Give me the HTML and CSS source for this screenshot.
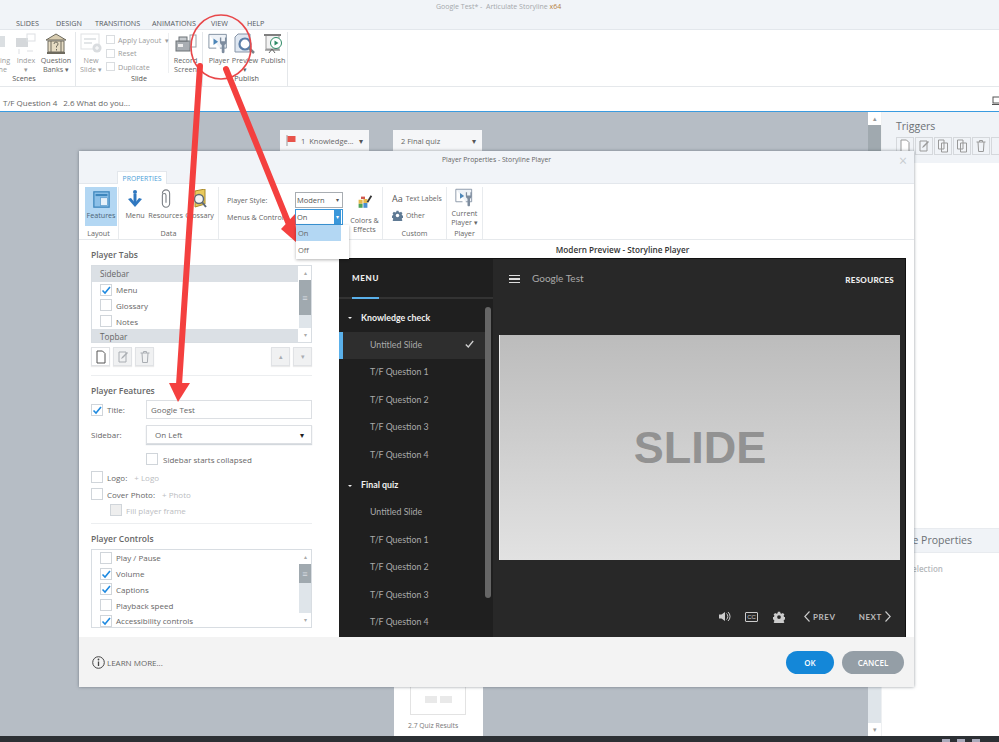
FILE: index.html
```html
<!DOCTYPE html>
<html lang="en">
<head>
<meta charset="utf-8">
<title>Player Properties - Storyline Player</title>
<link rel="stylesheet" href="styles.css">
</head>
<body>
<svg class="defs" width="0" height="0">
  <symbol id="check" viewBox="0 0 12 12"><path d="M2.5 6.5 L5 9 L10 3" fill="none" stroke="#1f8ae0" stroke-width="1.6"/></symbol>
  <symbol id="player-ico" viewBox="0 0 24 24"><path d="M1 1.5h19v15H13" fill="#eef2f7" stroke="#7d8c9e"/><path d="M1 1.5v15h8" fill="none" stroke="#7d8c9e"/><path d="M6 6l5 3.5L6 13z" fill="#4d86b8"/><path d="M13 5v5a3.5 3.5 0 0 0 2 3v8a1.6 1.6 0 0 0 3 0v-8a3.5 3.5 0 0 0 2-3V5l-1.500 0v4h-4V5z" fill="#7d8c9e"/></symbol>
  <symbol id="gear" viewBox="0 0 16 16"><path d="M6.500 1h3l.4 2 1.500.7 1.800-1.100 2 2-1.100 1.800.7 1.500 2 .4v3l-2 .4-.7 1.500 1.100 1.800-2 2-1.800-1.100-1.500.7-.4 2h-3l-.4-2-1.500-.7-1.800 1.100-2-2 1.100-1.800-.7-1.500-2-.4v-3l2-.4.7-1.500-1.100-1.800 2-2 1.800 1.100 1.500-.7z" fill="currentColor"/><circle cx="8" cy="8" r="2.500" fill="var(--hole,#fff)"/></symbol>
  <symbol id="doc" viewBox="0 0 12 14"><path d="M2 1h5.500L10 3.500V13H2z" fill="#fff" stroke="currentColor"/></symbol>
  <symbol id="edit" viewBox="0 0 12 14"><path d="M2 2h7v10H2z" fill="none" stroke="currentColor"/><path d="M4 9l1 -2 5 -5 1 1-5 5z" fill="currentColor"/></symbol>
  <symbol id="trash" viewBox="0 0 12 14"><path d="M1.500 3h9M4.500 3V1.500h3V3M3 3l.6 9.500h4.800L9 3" fill="none" stroke="currentColor"/></symbol>
  <symbol id="copy" viewBox="0 0 12 14"><path d="M1.500 1h5.500v9H1.500zM4.500 4h6v9h-6z" fill="#f3f5f8" stroke="currentColor"/></symbol>
</svg>

<div class="page">
  <div class="app">
    <header class="titlebar">
      <div class="wintitle">Google Test* -&nbsp; Articulate Storyline <span class="x64">x64</span></div>
      <nav class="apptabs">
        <span class="t1">SLIDES</span><span class="t2">DESIGN</span><span class="t3">TRANSITIONS</span><span class="t4">ANIMATIONS</span><span class="t5">VIEW</span><span class="t6">HELP</span>
      </nav>
    </header>
    <section class="appribbon">
      <div class="ag ag-scenes">
        <div class="ag-body">
          <div class="ai ai-start dim">
            <svg class="ico" width="22" height="22" viewBox="0 0 22 22"><rect x="5" y="3" width="14" height="11" fill="#c9ced3"/></svg>
            <span>Starting<br>Scene</span>
          </div>
          <div class="ai ai-index dim">
            <svg class="ico" width="22" height="22" viewBox="0 0 22 22"><rect x="1" y="5" width="12" height="9" fill="#bfc4c9"/><rect x="12" y="1" width="8" height="7" fill="none" stroke="#ccd1d6"/><path d="M4 16v5M12 18h6" stroke="#ccd1d6"/></svg>
            <span>Index<br>▾</span>
          </div>
          <div class="ai ai-qb">
            <svg class="ico" width="22" height="22" viewBox="0 0 22 22"><path d="M1 7L11 1l10 6z" fill="#d9cdb0" stroke="#6e6a5e"/><rect x="3" y="8" width="16" height="11" fill="#e6dcc4" stroke="#6e6a5e"/><path d="M2 20h18" stroke="#6e6a5e" stroke-width="2"/><path d="M6 8v11M16 8v11" stroke="#6e6a5e"/><path d="M9 11a2 2 0 1 1 2.500 2v1.500M11.500 16v1.500" fill="none" stroke="#6e6a5e"/></svg>
            <span>Question<br>Banks ▾</span>
          </div>
        </div>
        <div class="ag-label">Scenes</div>
      </div>
      <div class="ag ag-slide">
        <div class="ag-body">
          <div class="ai ai-new dim">
            <svg class="ico" width="22" height="22" viewBox="0 0 22 22"><rect x="1" y="1" width="18" height="15" fill="#fff" stroke="#cfd3d7"/><path d="M4 6h12M4 10h8" stroke="#d5d9dd" stroke-width="2"/><circle cx="17" cy="15" r="4.500" fill="#c5cacf"/><path d="M15 15h4M17 13v4" stroke="#fff"/></svg>
            <span>New<br>Slide ▾</span>
          </div>
          <ul class="slidecmds dim">
            <li><i class="smallbox"></i>Apply Layout <em>▾</em></li>
            <li><i class="smallbox"></i>Reset</li>
            <li><i class="smallbox"></i>Duplicate</li>
          </ul>
          <div class="ai ai-record">
            <svg class="ico" width="22" height="22" viewBox="0 0 22 22"><rect x="1" y="8" width="14" height="10" fill="#a9aeb3" stroke="#6c7277"/><rect x="4" y="4" width="8" height="4" fill="#c7cbcf" stroke="#6c7277"/><rect x="3" y="11" width="5" height="3" fill="#f0f0f0"/><rect x="15" y="2" width="6" height="12" fill="none" stroke="#9aa1a7"/></svg>
            <span>Record<br>Screen</span>
          </div>
        </div>
        <div class="ag-label ag-label-slide">Slide</div>
      </div>
      <div class="ag ag-publish">
        <div class="ag-body">
          <div class="ai ai-player">
            <svg class="ico" width="22" height="22"><use href="#player-ico"/></svg>
            <span>Player</span>
          </div>
          <div class="ai ai-preview">
            <svg class="ico" width="22" height="22" viewBox="0 0 22 22"><path d="M1 4l3-3h12v18H1z" fill="#dfe7f1" stroke="#8795a8"/><circle cx="11" cy="11" r="5.500" fill="#fff" stroke="#5c7ea8" stroke-width="2.200"/><path d="M15 15l5 5" stroke="#7b8087" stroke-width="2.500"/></svg>
            <span>Preview<br>▾</span>
          </div>
          <div class="ai ai-publishbtn">
            <svg class="ico" width="22" height="22" viewBox="0 0 22 22"><path d="M2 2h17" stroke="#555" stroke-width="1.500"/><path d="M4 3v13h13V3" fill="#f2f2f2" stroke="#9a9a9a"/><circle cx="14" cy="10" r="5.500" fill="#fff" stroke="#2e8a66"/><path d="M12.500 7.500l4 2.500-4 2.500z" fill="#2e8a66"/><path d="M7 20l3-4 3 4M3 17h15" stroke="#666" fill="none"/></svg>
            <span>Publish</span>
          </div>
        </div>
        <div class="ag-label ag-label-pub">Publish</div>
      </div>
    </section>
    <div class="crumbs"><span>T/F Question 4</span><span>2.6 What do you...</span><svg class="crumb-ico" width="8" height="10" viewBox="0 0 8 10"><rect x="1" y="1" width="7" height="6" fill="none" stroke="#555"/><path d="M0 8.500h8" stroke="#555"/></svg></div>

    <div class="workspace">
      <main class="canvas">
        <div class="scene scene1">
          <svg width="10" height="11" viewBox="0 0 10 11"><path d="M1 0v11" stroke="#999"/><path d="M1.500 1h8v6h-8z" fill="#e8534a"/></svg>
          <span>1&nbsp; Knowledge...</span><b>▾</b>
        </div>
        <div class="scene scene2"><span>2 Final quiz</span><b>▾</b></div>
        <div class="quizcard">
          <div class="quizthumb"><i></i><i></i></div>
          <div class="quizname">2.7 Quiz Results</div>
        </div>
      </main>
      <div class="vscroll">
        <div class="vs-btn">▴</div>
        <div class="vs-thumb"></div>
        <div class="vs-track"></div>
        <div class="vs-btn">▾</div>
      </div>
      <aside class="panel">
        <div class="p-head">
          <div class="p-title">Triggers</div>
          <div class="p-tools">
            <i><svg width="12" height="14"><use href="#doc"/></svg></i>
            <i><svg width="12" height="14"><use href="#edit"/></svg></i>
            <i><svg width="12" height="14"><use href="#copy"/></svg></i>
            <i><svg width="12" height="14"><use href="#copy"/></svg></i>
            <i><svg width="12" height="14"><use href="#trash"/></svg></i>
            <i></i>
          </div>
        </div>
        <div class="p-blank"></div>
        <div class="p-head2">Slide Properties</div>
        <div class="p-none">No selection</div>
      </aside>
    </div>
    <footer class="statusbar"><i></i><i></i><i></i></footer>
  </div>

  <div class="dialog">
    <div class="d-title">
      <div class="d-caption">Player Properties - Storyline Player</div>
      <div class="d-close">×</div>
      <div class="d-tab">PROPERTIES</div>
    </div>
    <div class="d-ribbon">
      <div class="dg dg-layout">
        <div class="dg-body">
          <div class="di di-on">
            <svg width="17" height="17" viewBox="0 0 20 20"><rect x="1" y="1" width="18" height="18" fill="#8cc0e8" stroke="#3d86bd" stroke-width="1.500"/><rect x="3" y="3.500" width="14" height="2.500" fill="#3d86bd"/><rect x="9" y="8" width="8" height="9" fill="#e8f2fa" stroke="#3d86bd" stroke-width=".6"/></svg>
            <span>Features</span>
          </div>
        </div>
        <div class="dg-label">Layout</div>
      </div>
      <div class="dg dg-data">
        <div class="dg-body">
          <div class="di di-menu">
            <svg width="20" height="20" viewBox="0 0 20 20"><circle cx="10" cy="3" r="2" fill="#2f78c0"/><path d="M10 5v10" stroke="#2f78c0" stroke-width="3"/><path d="M3 10l7 8 7-8-3-1-4 5-4-5z" fill="#2f78c0"/></svg>
            <span>Menu</span>
          </div>
          <div class="di di-res">
            <svg width="20" height="20" viewBox="0 0 20 22"><path d="M6 5a4 4 0 0 1 8 0v11a4 4 0 0 1-8 0V7a2 2 0 0 1 4 0v8" fill="none" stroke="#7a7f85" stroke-width="1.200"/></svg>
            <span>Resources</span>
          </div>
          <div class="di di-glos">
            <svg width="20" height="20" viewBox="0 0 20 20"><path d="M5 2l10-2v15l-10 3z" fill="#e9c95c" stroke="#a98b2c"/><circle cx="9" cy="10" r="4.500" fill="#f4f4f4" stroke="#5d6a77" stroke-width="1.400"/><path d="M12 13l4 5" stroke="#5d6a77" stroke-width="2"/></svg>
            <span>Glossary</span>
          </div>
        </div>
        <div class="dg-label">Data</div>
      </div>
      <div class="dg dg-style">
        <div class="dg-body dg-style-body">
          <div class="style-form">
            <div class="sf-row"><label>Player Style:</label><div class="sel">Modern<b>▾</b></div></div>
            <div class="sf-row"><label>Menus &amp; Controls:</label>
              <div class="sel sel-open">On<b>▾</b>
                <ul class="ddmenu"><li class="dd-on">On</li><li>Off</li></ul>
              </div>
            </div>
          </div>
          <div class="di di-colors">
            <svg width="16" height="16" viewBox="0 0 20 20"><path d="M2 6h5v5H2zM8 5h5v5H8z" fill="#e5b84a"/><path d="M2 11h5v5H2z" fill="#4ea35a"/><path d="M8 10h5v6H8z" fill="#4a8fd0"/><path d="M5 2h5v3H5z" fill="#d0594e"/><path d="M13 9l5-8" stroke="#333" stroke-width="2.200"/></svg>
            <span>Colors &amp;<br>Effects</span>
          </div>
        </div>
      </div>
      <div class="dg dg-custom">
        <div class="dg-body custom-body">
          <div class="cu-row"><span class="aa">Aa</span>Text Labels</div>
          <div class="cu-row"><svg class="cu-gear" width="11" height="11"><use href="#gear"/></svg>Other</div>
        </div>
        <div class="dg-label">Custom</div>
      </div>
      <div class="dg dg-player">
        <div class="dg-body">
          <div class="di">
            <svg width="20" height="20"><use href="#player-ico"/></svg>
            <span>Current<br>Player ▾</span>
          </div>
        </div>
        <div class="dg-label">Player</div>
      </div>
    </div>

    <div class="d-body">
      <div class="d-left">
        <h3 class="h-first">Player Tabs</h3>
        <div class="listbox">
          <div class="lb-rows">
            <div class="lb-group">Sidebar</div>
            <div class="lb-row"><i class="cb"><svg width="12" height="12"><use href="#check"/></svg></i>Menu</div>
            <div class="lb-row"><i class="cb"></i>Glossary</div>
            <div class="lb-row"><i class="cb"></i>Notes</div>
            <div class="lb-group">Topbar</div>
          </div>
          <div class="lb-scroll"><div class="lb-btn">▴</div><div class="lb-thumb lb-thumb-a">≡</div><div class="lb-track"></div><div class="lb-btn">▾</div></div>
        </div>
        <div class="toolrow">
          <i class="tb tb-on"><svg width="12" height="14"><use href="#doc"/></svg></i>
          <i class="tb"><svg width="12" height="14"><use href="#edit"/></svg></i>
          <i class="tb"><svg width="12" height="14"><use href="#trash"/></svg></i>
          <span class="grow"></span>
          <i class="tb">▴</i>
          <i class="tb">▾</i>
        </div>
        <hr class="rule">
        <h3>Player Features</h3>
        <div class="frow frow-title">
          <i class="cb"><svg width="12" height="12"><use href="#check"/></svg></i><label class="flab-cb">Title:</label>
          <div class="input">Google Test</div>
        </div>
        <div class="frow frow-side">
          <label class="flab">Sidebar:</label>
          <div class="input select">On Left<b>▾</b></div>
        </div>
        <div class="frow frow-coll"><i class="cb"></i><span>Sidebar starts collapsed</span></div>
        <div class="frow frow-logo"><i class="cb"></i><label class="lab2">Logo:</label><span class="plus">+ Logo</span></div>
        <div class="frow frow-cover"><i class="cb"></i><label class="lab2">Cover Photo:</label><span class="plus">+ Photo</span></div>
        <div class="frow frow-fill"><i class="cb cb-dis"></i><span class="dis">Fill player frame</span></div>
        <hr class="rule rule2">
        <h3>Player Controls</h3>
        <div class="listbox listbox2">
          <div class="lb-rows">
            <div class="lb-row"><i class="cb"></i>Play / Pause</div>
            <div class="lb-row"><i class="cb"><svg width="12" height="12"><use href="#check"/></svg></i>Volume</div>
            <div class="lb-row"><i class="cb"><svg width="12" height="12"><use href="#check"/></svg></i>Captions</div>
            <div class="lb-row"><i class="cb"></i>Playback speed</div>
            <div class="lb-row"><i class="cb"><svg width="12" height="12"><use href="#check"/></svg></i>Accessibility controls</div>
          </div>
          <div class="lb-scroll"><div class="lb-btn">▴</div><div class="lb-thumb lb-thumb-b">≡</div><div class="lb-track"></div><div class="lb-btn">▾</div></div>
        </div>
      </div>
      <div class="d-right">
        <div class="pv-title">Modern Preview - Storyline Player</div>
        <div class="pv">
          <div class="pv-side">
            <div class="pv-menuhead"><span>MENU</span></div>
            <div class="pv-list">
              <div class="pv-sec">Knowledge check</div>
              <div class="pv-item pv-cur">Untitled Slide<svg class="pv-tick" width="9" height="8" viewBox="0 0 9 8"><path d="M.8 4.500L3.300 7 8.200 1" fill="none" stroke="#cfcfcf" stroke-width="1.300"/></svg></div>
              <div class="pv-item">T/F Question 1</div>
              <div class="pv-item">T/F Question 2</div>
              <div class="pv-item">T/F Question 3</div>
              <div class="pv-item">T/F Question 4</div>
              <div class="pv-sec pv-sec2">Final quiz</div>
              <div class="pv-item">Untitled Slide</div>
              <div class="pv-item">T/F Question 1</div>
              <div class="pv-item">T/F Question 2</div>
              <div class="pv-item">T/F Question 3</div>
              <div class="pv-item">T/F Question 4</div>
              <div class="pv-sb"></div>
            </div>
          </div>
          <div class="pv-main">
            <div class="pv-top">
              <div class="pv-burger"><i></i><i></i><i></i></div>
              <div class="pv-name">Google Test</div>
              <div class="pv-res">RESOURCES</div>
            </div>
            <div class="pv-slide">SLIDE</div>
            <div class="pv-ctrl">
              <svg class="c-vol" width="12" height="11" viewBox="0 0 12 11"><path d="M0 3.500h2.500L6 1v9L2.500 7.500H0z" fill="#ccc"/><path d="M7.500 2.500a4 4 0 0 1 0 6M9 1a6 6 0 0 1 0 9" fill="none" stroke="#ccc"/></svg>
              <div class="c-cc">CC</div>
              <svg class="c-gear" width="12" height="12"><use href="#gear"/></svg>
              <svg class="c-chev c-chev-l" width="6" height="11" viewBox="0 0 6 11"><path d="M5.500.5L.8 5.500l4.700 5" fill="none" stroke="#ccc" stroke-width="1.100"/></svg>
              <span class="c-prev">PREV</span>
              <span class="c-next">NEXT</span>
              <svg class="c-chev" width="6" height="11" viewBox="0 0 6 11"><path d="M.5.500l4.700 5-4.700 5" fill="none" stroke="#ccc" stroke-width="1.100"/></svg>
            </div>
          </div>
        </div>
      </div>
    </div>

    <div class="d-foot">
      <svg width="13" height="13" viewBox="0 0 13 13"><circle cx="6.500" cy="6.500" r="5.800" fill="none" stroke="#444"/><path d="M6.500 5.500v4.500" stroke="#444" stroke-width="1.300"/><circle cx="6.500" cy="3.500" r=".9" fill="#444"/></svg>
      <span class="learn">LEARN MORE...</span>
      <span class="grow"></span>
      <div class="btn btn-ok">OK</div>
      <div class="btn btn-cancel">CANCEL</div>
    </div>
  </div>

  <svg class="annot" width="999" height="742" viewBox="0 0 999 742">
    <ellipse cx="221" cy="47" rx="30" ry="32" fill="none" stroke="#e8474a" stroke-width="1.600"/>
    <path d="M200 66L179 385" stroke="#f4403f" stroke-width="6" stroke-linecap="round"/>
    <path d="M169 383h21l-12 19z" fill="#f4403f"/>
    <path d="M226 69L288 222" stroke="#f4403f" stroke-width="6" stroke-linecap="round"/>
    <path d="M295 214L281 229l16 14z" fill="#f4403f"/>
  </svg>
</div>
</body>
</html>
```

FILE: styles.css
```css
* { box-sizing: border-box; }
html, body { margin: 0; padding: 0; }
body { font-family: "Open Sans", "Liberation Sans", sans-serif; color: #666; font-size: 8px; }
i, em { font-style: normal; }
ul { list-style: none; margin: 0; padding: 0; }
.defs { position: absolute; }
.grow { flex: 1; }
.page { position: relative; width: 999px; height: 742px; overflow: hidden; background: #fff; }
.app { display: flex; flex-direction: column; height: 742px; overflow: hidden; }

/* app chrome */
.titlebar { height: 30px; background: #f1f4f8; border-bottom: 1px solid #e3e7ec; padding-top: 2px; flex: none; }
.wintitle { margin-left: 436px; font-size: 7px; line-height: 9px; color: #a4a8ac; white-space: nowrap; }
.x64 { color: #b5803f; }
.apptabs { display: flex; font-size: 7.2px; line-height: 9px; margin-top: 8px; color: #55595e; }
.apptabs span { display: block; }
.t1 { margin-left: 16px; width: 40px; }
.t2 { width: 39px; }
.t3 { width: 57px; }
.t4 { width: 59px; }
.t5 { width: 36px; }

.appribbon { height: 57px; flex: none; display: flex; background: #fff; border-bottom: 1px solid #e5e8eb; overflow: hidden; }
.ag { padding-top: 1px; border-right: 1px solid #e4e7ea; height: 54px; margin-top: 2px; display: flex; flex-direction: column; flex: none; }
.ag-body { display: flex; height: 41px; }
.ag-label { text-align: center; font-size: 7.2px; line-height: 9px; margin-top: 0; color: #555; }
.ag-scenes { width: 103px; margin-left: -27px; }
.ag-slide { width: 127px; }
.ag-publish { width: 85px; }
.ai { display: flex; flex-direction: column; align-items: center; text-align: center; font-size: 7.2px; line-height: 8.500px; color: #666; flex: none; white-space: nowrap; }
.ai .ico { margin-bottom: 1px; }
.ai-start { width: 48px; }
.ai-index { width: 24px; margin-left: -7px; }
.ai-qb { width: 36px; }
.dim { opacity: .65; }
.ai-new { width: 30px; }
.slidecmds { font-size: 7.2px; width: 63px; border-right: 1px solid #e4e7ea; height: 40px; flex: none; }
.slidecmds li { display: flex; align-items: center; height: 13.500px; white-space: nowrap; }
.slidecmds em { margin-left: 4px; }
.smallbox { width: 9px; height: 9px; border: 1px solid #c7ccd1; margin-right: 3px; flex: none; }
.ai-record { width: 33px; }
.ai-player { width: 30px; margin-left: 1px; }
.ai-preview { width: 22px; }
.ai-publishbtn { width: 34px; }
.ag-label-slide { padding-right: 0; }
.ag-label-pub { margin-left: 3px; }

.crumbs { height: 25px; flex: none; background: #fff; border-bottom: 1px solid #3a9be0; display: flex; align-items: center; gap: 6px; padding: 7px 0 0 3px; font-size: 8px; color: #666; position: relative; }
.crumb-ico { position: absolute; right: -1px; top: 9px; }
.workspace { flex: 1; display: flex; min-height: 0; }
.canvas { width: 868px; background: #b6bdc5; position: relative; }
.scene { position: absolute; top: 18px; height: 21px; width: 89px; background: #f5f6f8; display: flex; align-items: center; padding: 0 6px; font-size: 7.500px; color: #666; gap: 5px; }
.scene span { flex: 1; white-space: nowrap; }
.scene b { font-size: 8px; font-weight: 400; color: #555; }
.scene1 { left: 280px; }
.scene2 { left: 393px; padding-left: 8px; }
.quizcard { position: absolute; left: 394px; top: 575px; width: 89px; height: 49px; background: #fff; padding-left: 16px; }
.quizthumb { width: 56px; height: 28px; border: 1px solid #e3e3e3; border-top: 0; display: flex; justify-content: center; gap: 3px; padding-top: 9px; }
.quizthumb i { width: 12px; height: 7px; background: #e9e9e9; }
.quizname { font-size: 6.800px; line-height: 9px; margin: 6px 0 0 -2px; color: #777; white-space: nowrap; }
.vscroll { width: 13px; display: flex; flex-direction: column; flex: none; background: #dfe5ea; }
.vs-btn { height: 13px; background: #fff; text-align: center; font-size: 7px; line-height: 13px; color: #999; }
.vs-thumb { height: 60px; background: #a0a9af; }
.vs-track { flex: 1; }
.panel { width: 118px; flex: none; background: #fff; display: flex; flex-direction: column; overflow: hidden; border-left: 1px solid #eef0f2; }
.p-head { height: 51px; background: #f0f3f7; padding: 7px 0 0 14px; flex: none; }
.p-title { font-size: 10.500px; line-height: 14px; color: #6b7075; }
.p-tools { display: flex; gap: 1px; margin-top: 4px; }
.p-tools i { width: 18px; height: 18px; border: 1px solid #d5d8dc; flex: none; color: #999; padding: 1px 2px; display: block; }
.p-blank { height: 365px; flex: none; }
.p-head2 { height: 25px; background: #f0f3f7; border-top: 1px solid #e8ebef; border-bottom: 1px solid #e8ebef; line-height: 23px; font-size: 10.500px; padding-left: 13px; color: #6b7075; white-space: nowrap; flex: none; }
.p-none { font-size: 8px; color: #b5b8bb; padding: 10px 0 0 13px; font-weight: 600; }
.statusbar { height: 6px; background: #2c3034; flex: none; display: flex; justify-content: flex-end; gap: 7px; padding: 3px 19px 0 0; }
.statusbar i { width: 8px; height: 3px; background: #aab; }

/* dialog */
.dialog { position: absolute; left: 79px; top: 151px; width: 835px; height: 536px; background: #fff; display: flex; flex-direction: column; box-shadow: 0 0 3px rgba(60,70,80,.55); }
.d-title { height: 33px; flex: none; background: #f1f4f8; border-bottom: 1px solid #e3e7ec; position: relative; }
.d-caption { text-align: center; font-size: 6.800px; line-height: 18px; color: #666; }
.d-close { position: absolute; right: 7px; top: 3px; font-size: 14px; line-height: 14px; color: #c8ccd0; }
.d-tab { position: absolute; left: 38px; bottom: -1px; width: 50px; height: 13px; background: #fff; border: 1px solid #e3e7ec; border-bottom: 0; text-align: center; font-size: 6.800px; line-height: 13px; color: #4a9ed8; }

.d-ribbon { height: 56px; flex: none; display: flex; border-bottom: 1px solid #e6e9ec; padding-top: 3px; }
.dg { border-right: 1px solid #e8ebee; height: 52px; flex: none; display: flex; flex-direction: column; }
.dg-body { height: 40px; display: flex; }
.dg-label { text-align: center; font-size: 7.200px; line-height: 9px; margin-top: 2px; color: #666; }
.dg-layout { width: 40px; padding-left: 6px; }
.dg-layout .dg-label { margin-left: -6px; }
.dg-data { width: 100px; }
.dg-style { width: 164px; }
.dg-custom { width: 64px; }
.dg-player { width: 36px; }
.di { display: flex; flex-direction: column; align-items: center; text-align: center; font-size: 7.200px; line-height: 8.500px; color: #666; padding-top: 2px; width: 100%; white-space: nowrap; }
.di svg { flex: none; margin-bottom: 2px; }
.di-on { background: #b3d7f3; width: 32px; height: 39px; flex: none; padding-top: 4px; }
.di-on svg { margin-bottom: 3px; }
.di-on span { color: #4c6478; }
.di-menu { width: 31px; margin-left: 1px; }
.di-res { width: 31px; }
.di-glos { width: 38px; }
.dg-style-body { padding: 5px 0 0 8px; }
.style-form { width: 124px; flex: none; }
.sf-row { display: flex; height: 16.500px; align-items: center; position: relative; }
.sf-row label { width: 68px; font-size: 7.200px; white-space: nowrap; color: #666; }
.sel { width: 48px; height: 16px; border: 1px solid #a8adb2; font-size: 7.500px; line-height: 14px; padding-left: 1px; position: relative; color: #555; background: #fff; flex: none; }
.sel b { position: absolute; right: 1px; top: 0; width: 7px; font-weight: 400; font-size: 6px; text-align: center; color: #555; }
.sel-open { border-color: #3a97da; }
.sel-open b { background: #3a97da; color: #fff; height: 14px; }
.ddmenu { position: absolute; left: 0; top: 15px; width: 53px; height: 34px; background: #fff; box-shadow: 0 1px 3px rgba(0,0,0,.3); z-index: 3; }
.ddmenu li { height: 16px; padding-left: 2px; line-height: 16px; margin-bottom: 1px; color: #666; width: 45px; }
.dd-on { background: #b3d7f3; }
.di-colors { width: 27px; padding-top: 3px; flex: none; }
.di-colors svg { margin-bottom: 5px; }
.custom-body { display: block; padding: 3px 0 0 9px; }
.cu-row { display: flex; align-items: center; gap: 2px; height: 17px; font-size: 6.900px; white-space: nowrap; }
.aa { font-size: 9px; color: #555; margin-right: 1px; }
.cu-gear { color: #5f7a94; --hole: #fff; margin-right: 1px; }
.dg-player .di { padding-top: 1px; }
.dg-player .di svg { margin-bottom: 1px; }

.d-body { flex: 1; display: flex; min-height: 0; }
.d-left { width: 260px; flex: none; padding: 0 0 0 12px; font-size: 8px; }
.d-left h3 { margin: 9px 0 0; font-size: 8.500px; line-height: 12px; font-weight: 600; color: #666; }
.listbox { width: 221px; height: 78px; margin-top: 4px; border: 1px solid #d8dde2; display: flex; overflow: hidden; }
.listbox2 { height: 79px; }
.lb-rows { flex: 1; min-width: 0; }
.lb-group { height: 15.750px; background: #dbe0e5; padding-left: 8px; line-height: 15.750px; font-size: 8.200px; color: #666; }
.lb-row { height: 15.750px; display: flex; align-items: center; padding-left: 8px; font-size: 8px; gap: 4px; color: #666; }
.cb { width: 12px; height: 12px; border: 1px solid #d0d5da; background: #fff; display: block; flex: none; position: relative; }
.cb svg { position: absolute; left: -1px; top: -1px; }
.cb-dis { background: #eeeeee; }
.lb-scroll { width: 13px; flex: none; background: #dfe5ea; display: flex; flex-direction: column; border-left: 1px solid #fff; }
.lb-btn { height: 14px; background: #fff; color: #aaa; font-size: 6px; text-align: center; line-height: 14px; flex: none; }
.lb-thumb { background: #a0a9af; color: #d8dde2; text-align: center; flex: none; font-size: 9px; }
.lb-thumb-a { height: 35px; line-height: 35px; }
.lb-thumb-b { height: 19px; line-height: 19px; }
.lb-track { flex: 1; }
.toolrow { width: 221px; display: flex; height: 19px; margin-top: 4px; gap: 3px; }
.tb { width: 19px; height: 19px; background: #f0f1f2; border: 1px solid #e0e2e5; color: #a9adb2; display: flex; align-items: center; justify-content: center; font-size: 7px; flex: none; box-shadow: 0 1px 1px rgba(0,0,0,.08); }
.tb-on { background: #fff; color: #555; }
.rule { width: 221px; height: 1px; border: 0; background: #eceef0; margin: 9px 0 0; }
.frow { display: flex; align-items: center; width: 221px; font-size: 8px; color: #666; }
.frow-title { height: 19px; margin-top: 3px; }
.flab-cb { width: 39px; margin-left: 4px; }
.flab { width: 55px; }
.input { flex: 1; height: 19px; border: 1px solid #dcdfe3; line-height: 17px; padding-left: 4px; color: #666; font-size: 8px; position: relative; }
.select { padding-left: 8px; box-shadow: 0 1px 1px rgba(80,100,120,.25); }
.select b { position: absolute; right: 7px; top: 0; font-weight: 400; font-size: 8px; color: #222; }
.frow-side { height: 19px; margin-top: 6px; }
.frow-coll { height: 14px; margin-top: 8px; padding-left: 55px; gap: 5px; }
.frow-logo { height: 14px; margin-top: 4px; gap: 4px; }
.frow-cover { height: 14px; margin-top: 3px; gap: 4px; }
.frow-fill { height: 14px; margin-top: 2px; padding-left: 19px; gap: 4px; }
.lab2 { margin-right: 3px; }
.plus, .dis { color: #bbbdbf; }
.rule2 { margin-top: 6px; }

.d-right { flex: 1; display: flex; flex-direction: column; min-width: 0; padding-right: 8px; }
.pv-title { height: 18px; line-height: 19px; text-align: center; font-size: 8.200px; font-weight: 600; color: #333; white-space: nowrap; }
.pv { height: 379px; background: #282828; display: flex; font-family: Lato, "Open Sans", sans-serif; border-right: 1px solid #111; border-top: 1px solid #111; overflow: hidden; }
.pv-side { width: 154px; flex: none; background: #1f1f1f; }
.pv-menuhead { height: 40px; border-bottom: 2px solid #333; padding-left: 13px; }
.pv-menuhead span { display: block; width: 27px; height: 40px; border-bottom: 2px solid #5ab0ea; font-size: 8px; font-weight: 900; letter-spacing: .7px; line-height: 38px; color: #eee; }
.pv-list { position: relative; }
.pv-sec { height: 33px; padding: 13px 0 0 22px; font-size: 8.800px; line-height: 12px; font-weight: 700; color: #f0f0f0; position: relative; }
.pv-sec::before { content: ""; position: absolute; left: 9px; top: 18px; border: 2.500px solid transparent; border-top-color: #eee; border-bottom: 0; }
.pv-sec2 { height: 30.500px; padding-top: 10px; }
.pv-sec2::before { top: 16px; }
.pv-item { height: 27.400px; padding-left: 31px; font-size: 8.800px; line-height: 26px; color: #aaa; position: relative; }
.pv-cur { background: #2e2e2e; border-left: 4px solid #5ab0ea; padding-left: 27px; width: 146px; }
.pv-tick { position: absolute; right: 11px; top: 8px; }
.pv-sb { position: absolute; left: 146px; top: 8px; width: 6px; height: 291px; border-radius: 3px; background: #666; }
.pv-main { flex: 1; min-width: 0; display: flex; flex-direction: column; }
.pv-top { height: 76px; flex: none; display: flex; padding: 13px 11px 0 16px; }
.pv-burger { width: 11px; height: 8px; display: flex; flex-direction: column; justify-content: space-between; margin-top: 3px; }
.pv-burger i { height: 1.400px; background: #ddd; display: block; }
.pv-name { margin-left: 12px; font-size: 10px; line-height: 12px; color: #aaa; }
.pv-res { margin-left: auto; margin-top: 2px; font-size: 8px; font-weight: 900; letter-spacing: .3px; line-height: 12px; color: #eee; }
.pv-slide { margin-left: 6px; width: 401px; height: 225px; flex: none; border-left: 1px solid #eee; background: linear-gradient(#bcbcbc, #e2e2e2); font-family: "Liberation Sans", Arial, sans-serif; font-weight: 700; font-size: 45px; line-height: 225px; text-align: center; color: #929292; }
.pv-ctrl { display: flex; align-items: center; height: 11px; margin-top: 51px; padding-left: 226px; color: #ccc; }
.c-cc { margin-left: 14px; width: 13px; height: 10px; border: 1px solid #ccc; border-radius: 1px; font-size: 6px; line-height: 8px; text-align: center; font-family: "Liberation Sans", sans-serif; }
.c-gear { margin-left: 15px; color: #ccc; --hole: #282828; }
.c-chev-l { margin-left: 19px; }
.c-prev { margin-left: 3px; font-size: 8px; letter-spacing: .6px; font-weight: 700; color: #bbb; }
.c-next { margin-left: 23px; margin-right: 3px; font-size: 8px; letter-spacing: .6px; font-weight: 700; color: #bbb; }

.d-foot { height: 50px; flex: none; background: #f3f3f3; display: flex; align-items: center; padding: 0 10px 0 13px; }
.learn { margin-left: 2px; font-size: 8px; color: #666; }
.btn { height: 23px; border-radius: 12px; color: #fff; text-align: center; font-size: 8px; font-weight: 600; line-height: 23px; }
.btn-ok { width: 48px; background: #1487d8; margin-right: 8px; }
.btn-cancel { width: 62px; background: #949ea6; }

.annot { position: absolute; left: 0; top: 0; pointer-events: none; }
```
